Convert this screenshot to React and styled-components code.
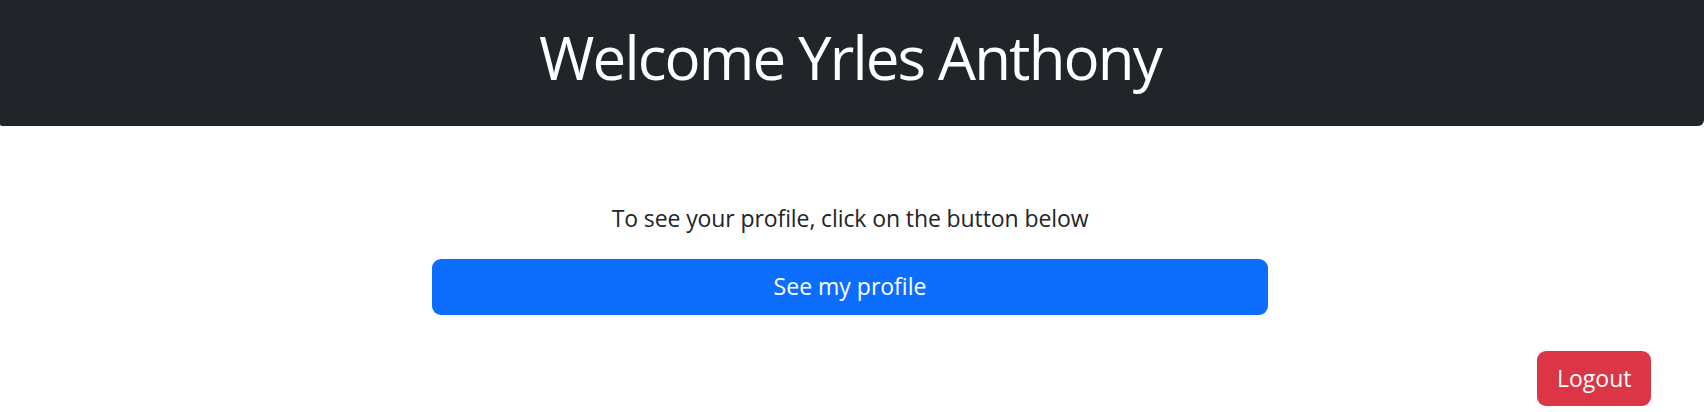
import styled, { createGlobalStyle } from "styled-components";

const GlobalStyle = createGlobalStyle`
  body {
    margin: 0;
    background: #fff;
    font-family: "Open Sans", "Noto Sans", sans-serif;
    color: #212529;
  }
`;

const Page = styled.div`
  display: flex;
  flex-direction: column;
  min-height: 412px;
`;

const Header = styled.header`
  height: 126px;
  box-sizing: border-box;
  padding: 21px 4px 0 0;
  background-color: #212529;
  border-radius: 0 0 6px 2px;
  text-align: center;
`;

const Title = styled.h1`
  margin: 0;
  font-size: 60px;
  font-weight: 400;
  letter-spacing: -1.85px;
  line-height: 1.2;
  color: #fff;
`;

const Main = styled.main`
  display: flex;
  flex-direction: column;
  align-items: center;
  padding: 75px 4px 0 0;
`;

const Intro = styled.p`
  margin: 0 0 23px;
  font-size: 23px;
  letter-spacing: -0.1px;
  line-height: 1.5;
`;

const Button = styled.button`
  box-sizing: border-box;
  height: ${(props) => props.height || "56px"};
  width: ${(props) => props.width || "auto"};
  padding: 0 20px;
  border: none;
  border-radius: 9px;
  background-color: ${(props) => props.color};
  color: #fff;
  font-family: inherit;
  font-size: 23px;
  line-height: 1.5;
  cursor: pointer;
`;

const Footer = styled.div`
  display: flex;
  justify-content: flex-end;
  padding: 36px 53px 0 0;
`;

export default function App() {
  return (
    <Page>
      <GlobalStyle />
      <Header>
        <Title>Welcome Yrles Anthony</Title>
      </Header>
      <Main>
        <Intro>To see your profile, click on the button below</Intro>
        <Button color="#0d6efd" width="836px">
          See my profile
        </Button>
      </Main>
      <Footer>
        <Button color="#dc3545" width="114px" height="55px">
          Logout
        </Button>
      </Footer>
    </Page>
  );
}
